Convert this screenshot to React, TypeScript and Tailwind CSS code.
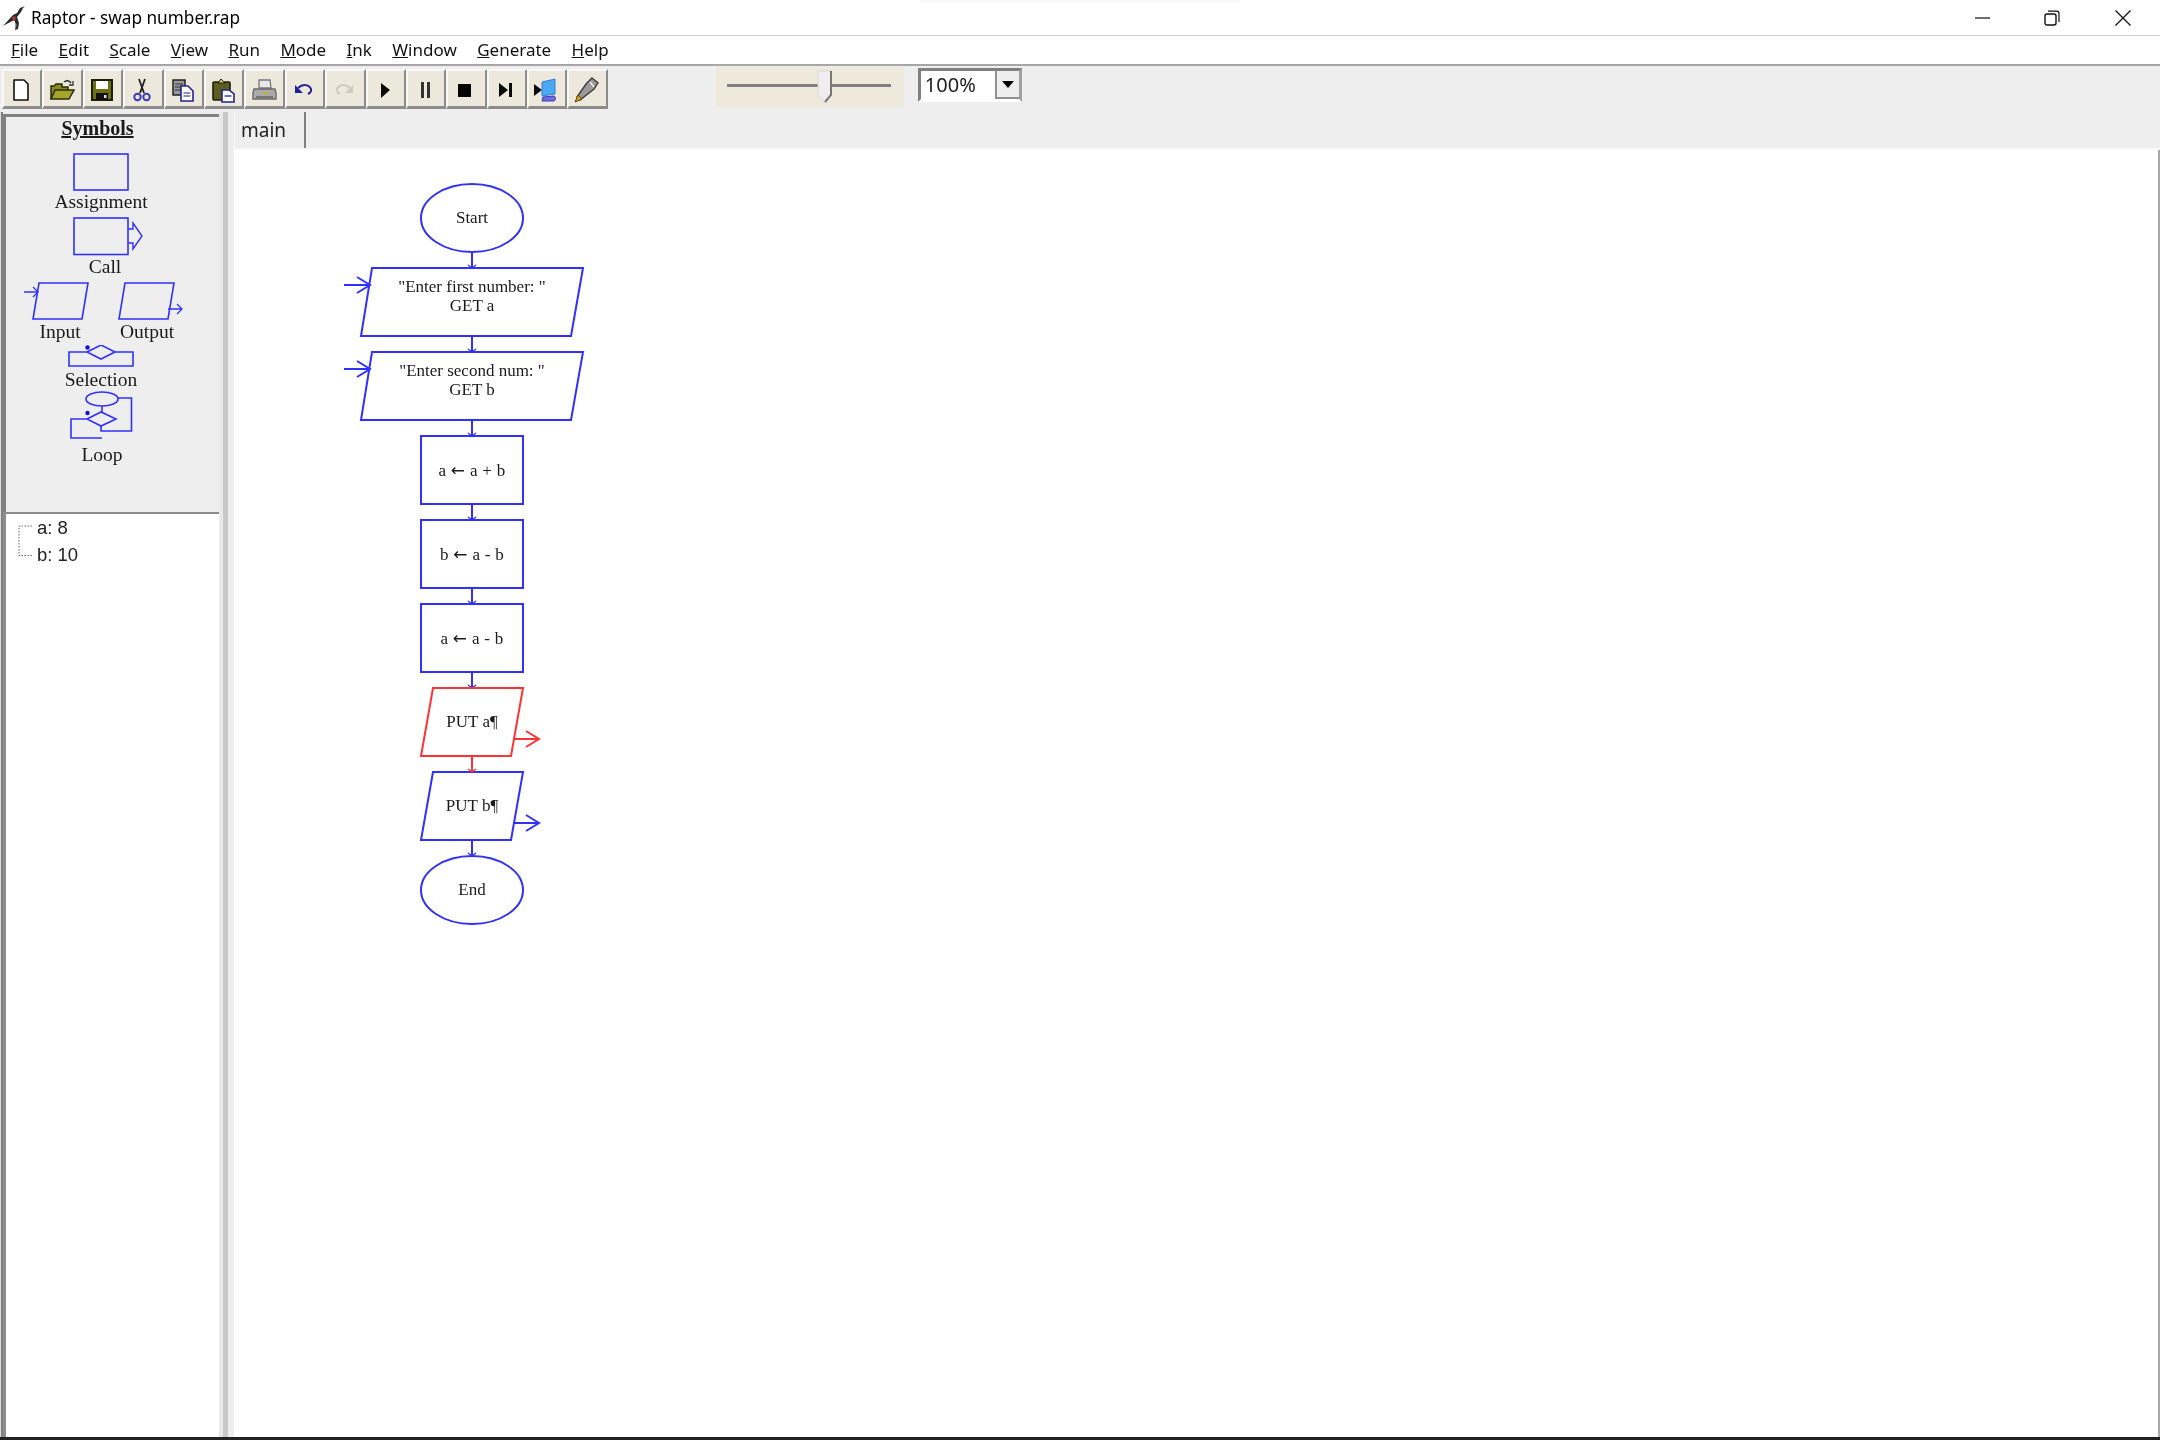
import { ReactNode } from "react";

const BLUE = "#3030ff";
const RED = "#ff3333";

const menus = ["File", "Edit", "Scale", "View", "Run", "Mode", "Ink", "Window", "Generate", "Help"];

function NewIcon() {
  return <path d="M6 3h10l4 4v16H6z" fill="#fff" stroke="#111" strokeWidth="1.6" strokeLinejoin="round" />;
}

function OpenIcon() {
  return (
    <>
      <path d="M2 22V9h3l2-2h6v3h6v3" fill="#8a8a1e" stroke="#2b2b08" strokeWidth="1.5" />
      <path d="M2 22l4-9h19l-5 9z" fill="#a5a52a" stroke="#2b2b08" strokeWidth="1.5" />
      <path d="M15 5c3-2 5-2 7 1" fill="none" stroke="#333" strokeWidth="1.5" />
      <path d="M24 4v4h-4" fill="none" stroke="#333" strokeWidth="1.3" />
    </>
  );
}

function SaveIcon() {
  return (
    <>
      <rect x="3" y="3" width="20" height="20" fill="#6f6f14" stroke="#1d1d08" strokeWidth="2" />
      <rect x="7" y="4" width="12" height="8" fill="#fff" />
      <rect x="7" y="16" width="12" height="7" fill="#111" />
      <rect x="15" y="18" width="2.5" height="3" fill="#ddd" />
    </>
  );
}

function CutIcon() {
  return (
    <>
      <path d="M10 2l5 14M16 2l-5 14" stroke="#222" strokeWidth="1.8" fill="none" />
      <circle cx="8.5" cy="20" r="3.2" fill="none" stroke="#3a3ab8" strokeWidth="2" />
      <circle cx="17.5" cy="20" r="3.2" fill="none" stroke="#3a3ab8" strokeWidth="2" />
    </>
  );
}

function CopyIcon() {
  return (
    <>
      <rect x="3" y="3" width="12" height="15" fill="#999" stroke="#222" strokeWidth="1.5" />
      <path d="M5 7h8M5 10h8M5 13h8" stroke="#333" />
      <path d="M11 9h7l5 5v10H11z" fill="#fff" stroke="#23238f" strokeWidth="1.6" />
      <path d="M13.5 16h7M13.5 19h7" stroke="#23238f" strokeWidth="1.2" />
    </>
  );
}

function PasteIcon() {
  return (
    <>
      <rect x="3" y="5" width="17" height="18" rx="1" fill="#5d5d22" stroke="#1f1f0c" strokeWidth="1.6" />
      <path d="M8 6l3-4 4 4z" fill="#c9c96d" stroke="#1f1f0c" />
      <path d="M12 13h7l5 4v8H12z" fill="#fff" stroke="#23238f" strokeWidth="1.6" />
      <path d="M14.5 19h7" stroke="#23238f" strokeWidth="1.3" />
    </>
  );
}

function PrintIcon() {
  return (
    <>
      <path d="M8 3h11l1 8H8z" fill="#e8e8e8" stroke="#777" strokeWidth="1.3" />
      <path d="M3 12h21l1 4v6H2v-6z" fill="#aaa" stroke="#6a6a6a" strokeWidth="1.4" />
      <rect x="5" y="19" width="17" height="3" fill="#777" />
      <rect x="12" y="15" width="5" height="1.5" fill="#c9b400" />
    </>
  );
}

function UndoIcon({ color }: { color: string }) {
  return (
    <>
      <path d="M7 11c4-4 11-4 13 1 .7 3-1 4-3 5" fill="none" stroke={color} strokeWidth="2" />
      <path d="M4 8v8h8z" fill={color} />
    </>
  );
}

function RedoIcon() {
  return (
    <>
      <path d="M19 11c-4-4-11-4-13 1-.7 3 1 4 3 5" fill="none" stroke="#cdcbbd" strokeWidth="2" />
      <path d="M22 8v8h-8z" fill="#cdcbbd" />
    </>
  );
}

function MonitorIcon() {
  return (
    <>
      <path d="M1 7l8 6-8 6z" fill="#0b0b0b" />
      <path d="M9 5l13-3v15l-13 2z" fill="#4aa8f5" stroke="#3a7fd0" />
      <path d="M10 20l11-1c2 1 2 4 0 5H9z" fill="#6d6de0" stroke="#3a3ab8" />
    </>
  );
}

function PenIcon() {
  return (
    <>
      <path d="M18 1l6 5-4 6-14 11-3-3 9-13z" fill="#9a9a9a" stroke="#3d3d3d" strokeWidth="1.4" />
      <path d="M16 5l4 5" stroke="#eee" strokeWidth="1.5" />
      <path d="M4 18l4 4-7 3z" fill="#d8a417" stroke="#5a4505" />
    </>
  );
}

const tools: ReactNode[] = [
  <NewIcon key="new" />,
  <OpenIcon key="open" />,
  <SaveIcon key="save" />,
  <CutIcon key="cut" />,
  <CopyIcon key="copy" />,
  <PasteIcon key="paste" />,
  <PrintIcon key="print" />,
  <UndoIcon key="undo" color="#20209a" />,
  <RedoIcon key="redo" />,
  <path key="play" d="M9 6l9 7-9 8z" fill="#0a0a0a" />,
  <path key="pause" d="M9 5h3v16H9zM15 5h3v16h-3z" fill="#333" />,
  <rect key="stop" x="6" y="7" width="13" height="13" fill="#050505" />,
  <path key="step" d="M6 6l9 7-9 7zM16 6h3v14h-3z" fill="#0a0a0a" />,
  <MonitorIcon key="monitor" />,
  <PenIcon key="pen" />,
];

function ToolButton({ children }: { children: ReactNode }) {
  return (
    <div className="w-[40.4px] h-[40px] flex items-center justify-center pr-[2px] pt-[3px] bg-[#ece9dc] border-t-2 border-l-2 border-t-[#f8f8f8] border-l-[#f8f8f8] border-r-2 border-b-[3px] border-r-[#8c8c8c] border-b-[#8c8c8c]">
      <svg width="26" height="26" viewBox="0 0 26 26">
        {children}
      </svg>
    </div>
  );
}

function Raptor() {
  return (
    <svg width="24" height="28" viewBox="0 0 24 28">
      <path d="M24 2l-5 2-3 5-4 2-10 11 11-6 2 4-1 6 3-1 1-6-2-6 4-5 2-4z" fill="#2b2b2b" />
      <path d="M11 13l3-1 1 3-3 2z" fill="#a83a3a" />
      <path d="M14 18l2 3-1 3z" fill="#4a5ab0" />
    </svg>
  );
}

function Titlebar() {
  return (
    <div className="relative h-[36px] shrink-0 bg-white border-b border-[#cfcfcf] flex items-center">
      <div className="absolute top-0 left-[920px] w-[320px] h-[2px] bg-[#f3f3f3] blur-[1px]" />
      <div className="w-[30px] pl-[1px] flex items-center">
        <Raptor />
      </div>
      <span className="text-[17.2px] text-black pl-px">Raptor - swap number.rap</span>
      <div className="ml-auto flex items-center pr-[29px] gap-[55px]">
        <svg width="15" height="15" viewBox="0 0 15 15" className="mr-[-1px]">
          <path d="M0 8h15" stroke="#111" strokeWidth="1.2" />
        </svg>
        <svg width="16" height="16" viewBox="0 0 16 16">
          <rect x="1" y="4" width="11" height="11" rx="2" fill="none" stroke="#111" strokeWidth="1.4" />
          <path d="M4 1.2h8.5a2.5 2.5 0 0 1 2.5 2.5V12" fill="none" stroke="#111" strokeWidth="1.2" />
        </svg>
        <svg width="16" height="16" viewBox="0 0 16 16">
          <path d="M.5.5l15 15M15.5.5l-15 15" stroke="#111" strokeWidth="1.3" />
        </svg>
      </div>
    </div>
  );
}

function Menubar() {
  return (
    <div className="h-[30px] shrink-0 bg-white border-b-2 border-[#a6a6a6] flex items-center pl-[11px] gap-[20.4px] text-[17px] text-[#111]">
      {menus.map((m) => (
        <span key={m}>
          <span className="underline">{m[0]}</span>
          {m.slice(1)}
        </span>
      ))}
    </div>
  );
}

function Toolbar() {
  return (
    <div className="h-[46px] shrink-0 flex items-start pl-[2px]">
      <div className="flex mt-[3px]">
        {tools.map((t, i) => (
          <ToolButton key={i}>{t}</ToolButton>
        ))}
      </div>
      <div className="ml-[108px] mt-[1px] w-[188px] h-[40px] bg-[#efe9dc] flex items-center pl-[11px]">
        <div className="relative w-[164px] h-[3px] bg-[#808080] mt-[-3px]">
          <svg width="16" height="34" viewBox="0 0 16 34" className="absolute left-[90px] top-[-14px]">
            <path d="M1 1h13v24l-6 7-7-7z" fill="#eee" stroke="#d8d8d8" />
            <path d="M14 1v24l-6 7" fill="none" stroke="#777" strokeWidth="2" />
          </svg>
        </div>
      </div>
      <div className="ml-[14px] mt-[2px] w-[104px] h-[34px] flex bg-white border-[3px] border-[#808080] border-b-white border-r-[#a0a0a0]">
        <span className="flex-1 pl-[4px] text-[20px] leading-[28px] text-[#222]">100%</span>
        <div className="w-[24px] bg-[#eee] border-b-2 border-l-2 border-[#909090] flex items-center justify-center">
          <svg width="12" height="7" viewBox="0 0 12 7">
            <path d="M0 0h12l-6 7z" fill="#000" />
          </svg>
        </div>
      </div>
    </div>
  );
}

function SymbolLabel({ children, className = "" }: { children: ReactNode; className?: string }) {
  return <div className={`h-[22px] leading-[22px] text-center text-[19.5px] text-[#1a1a1a] ${className}`}>{children}</div>;
}

function Palette() {
  return (
    <div className="h-[398px] shrink-0 bg-[#eeeeee] border-t-[3px] border-l-[3px] border-[#808080] font-['Liberation_Serif',serif]">
      <div className="w-[190px] h-[22px] leading-[22px] text-center text-[20px] font-bold underline text-[#1a1a1a] pr-[7px]">Symbols</div>

      <svg width="190" height="38" viewBox="6 153 190 38" className="block mt-[14px]" fill="none" stroke={BLUE} strokeWidth="1.6">
        <rect x="74" y="154" width="54" height="36" />
      </svg>
      <SymbolLabel className="w-[190px]">Assignment</SymbolLabel>

      <svg width="190" height="39" viewBox="6 217 190 39" className="block mt-[4px]" fill="none" stroke={BLUE} strokeWidth="1.6">
        <rect x="74" y="218" width="54" height="36.5" />
        <path d="M128 229h5v-6l9 13-9 13v-6h-5" strokeWidth="1.4" />
      </svg>
      <SymbolLabel className="w-[190px] pl-[8px]">Call</SymbolLabel>

      <svg width="190" height="38" viewBox="6 282 190 38" className="block mt-[4px]" fill="none" stroke={BLUE} strokeWidth="1.6">
        <path d="M39 283h49l-6 36H33z" />
        <path d="M24 292h14M33 287l5 5-5 5" strokeWidth="1.3" />
        <path d="M125 283h49l-6 36h-49z" />
        <path d="M168 309h14M177 304l5 5-5 5" strokeWidth="1.3" />
      </svg>
      <div className="flex mt-[1px]">
        <SymbolLabel className="w-[108px]">Input</SymbolLabel>
        <SymbolLabel className="w-[66px]">Output</SymbolLabel>
      </div>

      <svg width="190" height="23" viewBox="6 345 190 23" className="block mt-[2px]" fill="none" stroke={BLUE} strokeWidth="1.6">
        <path d="M87 352H69v14h64v-14h-18l-14-7-14 7 14 7 14-7" />
        <circle cx="87.5" cy="347.5" r="2.2" fill="#1010e0" stroke="none" />
      </svg>
      <SymbolLabel className="w-[190px] mt-[1px]">Selection</SymbolLabel>

      <svg width="190" height="48" viewBox="6 390 190 48" className="block" fill="none" stroke={BLUE} strokeWidth="1.6">
        <ellipse cx="102" cy="398" rx="16" ry="7" />
        <path d="M102 405v6M118 397h13.5v33H101v-5" />
        <path d="M87 418l14-7 15 7-15 7zM87 418H71v19h31" />
        <circle cx="87.5" cy="412" r="2.2" fill="#1010e0" stroke="none" />
      </svg>
      <SymbolLabel className="w-[190px] pl-[2px] mt-[5px]">Loop</SymbolLabel>
    </div>
  );
}

function Watches() {
  return (
    <div className="flex-1 bg-white border-t-[2px] border-l-[3px] border-[#8c8c8c] flex font-['Liberation_Sans',sans-serif]">
      <svg width="32" height="44" viewBox="0 0 32 44" className="shrink-0 ml-[-1px]">
        <path d="M27 12h-13v29.5h13" fill="none" stroke="#666" strokeDasharray="1.5 1.5" />
      </svg>
      <div className="text-[18.5px] text-[#222] leading-[27px]">
        <div>a: 8</div>
        <div>b: 10</div>
      </div>
    </div>
  );
}

function Sidebar() {
  return (
    <div className="w-[228px] shrink-0 flex">
      <div className="w-[3px] shrink-0 bg-[#808080] border-l border-[#dcdcdc]" />
      <div className="w-[216px] flex flex-col pt-[2px]">
        <Palette />
        <Watches />
      </div>
      <div className="w-[4px] bg-[#e8e8e8]" />
      <div className="w-[5px] bg-[#c8c8c8]" />
    </div>
  );
}

function Flowchart() {
  const rects = [
    { y: 436, lhs: "a", rhs: "a + b" },
    { y: 520, lhs: "b", rhs: "a - b" },
    { y: 604, lhs: "a", rhs: "a - b" },
  ];
  const joins = [252, 336, 420, 504, 588, 672, 756, 840];

  return (
    <svg width="400" height="800" viewBox="234 150 400 800" className="block font-['Liberation_Serif',serif] text-[17px]">
      <g fill="none" stroke={BLUE} strokeWidth="2">
        <ellipse cx="472" cy="218" rx="51" ry="34" />
        <path d="M372 268h211l-12 68H361z" />
        <path d="M344 285h26M357 277l13 8-13 8" />
        <path d="M372 352h211l-12 68H361z" />
        <path d="M344 369h26M357 361l13 8-13 8" />
        {rects.map((r) => (
          <rect key={r.y} x="421" y={r.y} width="102" height="68" />
        ))}
        <path d="M433 772h90l-12 68h-90z" />
        <path d="M513 823h26M526 815l13 8-13 8" />
        <ellipse cx="472" cy="890" rx="51" ry="34" />
        {joins.map((y) => (
          <g key={y} stroke={y === 756 ? RED : BLUE}>
            <path d={`M472 ${y}v16`} />
            <path d={`M468 ${y + 13}l4 3 4-3`} strokeWidth="1.2" />
          </g>
        ))}
      </g>
      <g fill="none" stroke={RED} strokeWidth="2">
        <path d="M433 688h90l-12 68h-90z" />
        <path d="M513 739h26M526 731l13 8-13 8" />
      </g>
      <g fill="#1a1a1a" textAnchor="middle">
        <text x="472" y="223">Start</text>
        <text x="472" y="292">"Enter first number: "</text>
        <text x="472" y="311">GET a</text>
        <text x="472" y="376">"Enter second num: "</text>
        <text x="472" y="395">GET b</text>
        {rects.map((r) => (
          <text key={r.y} x="472" y={r.y + 40} letterSpacing="0.3">
            {r.lhs} <tspan fontFamily="'DejaVu Sans', sans-serif" fontSize="17">←</tspan> {r.rhs}
          </text>
        ))}
        <text x="472" y="727">PUT a¶</text>
        <text x="472" y="811">PUT b¶</text>
        <text x="472" y="895">End</text>
      </g>
    </svg>
  );
}

function Workspace() {
  return (
    <div className="flex-1 flex flex-col pl-[6px] min-w-0">
      <div className="h-[38px] shrink-0 flex border-b-2 border-[#f8f8f8]">
        <div className="w-[72px] bg-[#eeeeee] border-r-2 border-[#808080] border-l border-l-[#f8f8f8] text-center text-[19px] leading-[37px] text-[#222] pr-[12px]">
          main
        </div>
      </div>
      <div className="flex-1 bg-white border-r-2 border-[#a8a8a8]">
        <Flowchart />
      </div>
    </div>
  );
}

export default function App() {
  return (
    <div className="w-[2160px] h-[1440px] overflow-hidden flex flex-col bg-[#eeeeee] font-['Noto_Sans',sans-serif] blur-[0.4px]">
      <Titlebar />
      <Menubar />
      <Toolbar />
      <div className="flex-1 flex min-h-0">
        <Sidebar />
        <Workspace />
      </div>
      <div className="h-[3px] shrink-0 bg-[#222222]" />
    </div>
  );
}
